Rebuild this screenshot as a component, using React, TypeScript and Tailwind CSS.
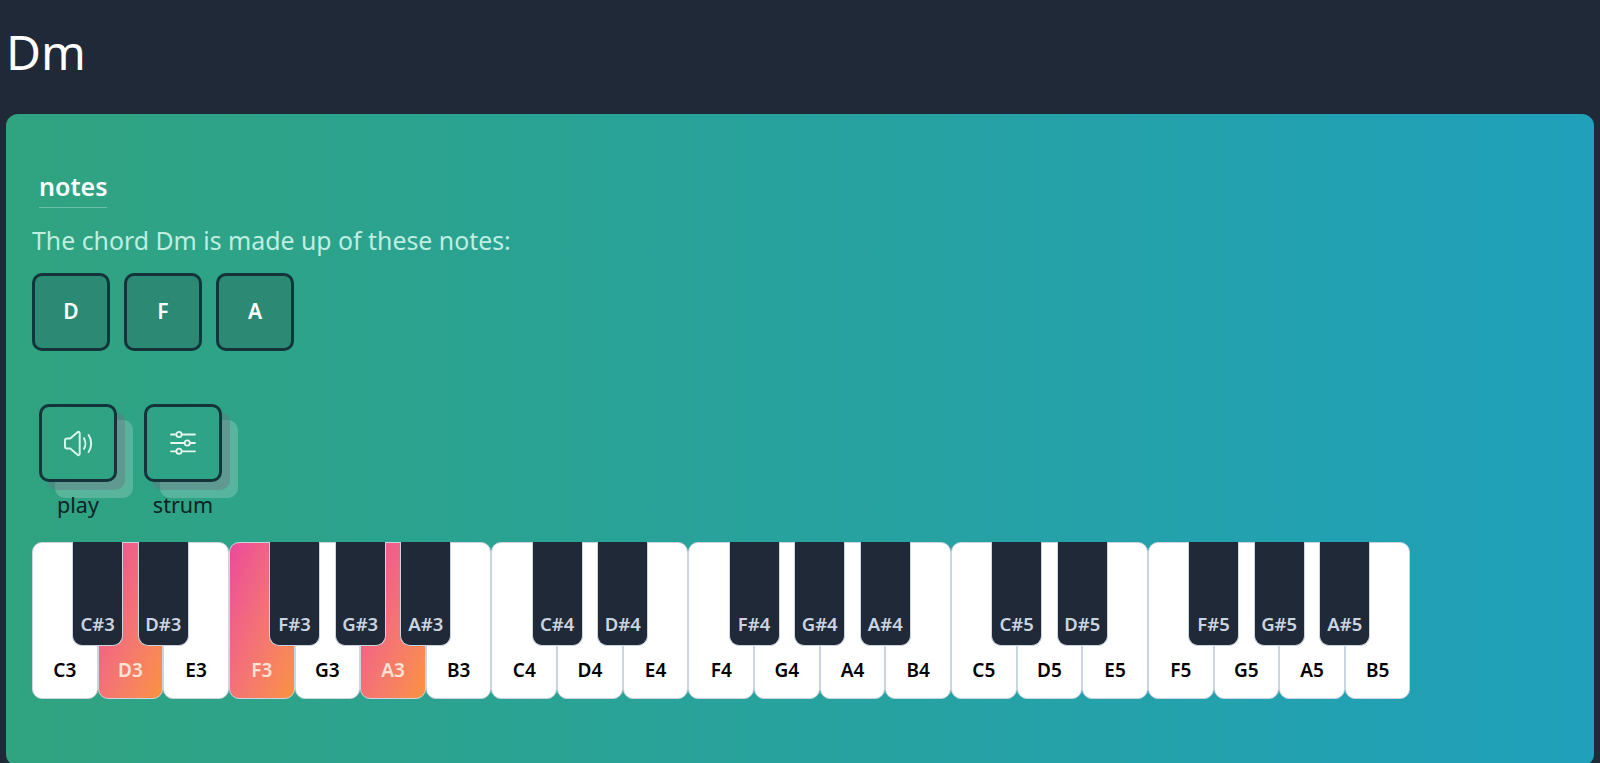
const WHITE = ["C","D","E","F","G","A","B"];
const HAS_SHARP: Record<string, boolean> = { C: true, D: true, F: true, G: true, A: true };
const HIGHLIGHT = ["D3", "F3", "A3"];
const OCTAVES = [3, 4, 5];

function SpeakerIcon() {
  return (
    <svg className="ml-[2px]" width="30" height="27" viewBox="0 0 30 27" fill="none" stroke="#d8f5ea" strokeWidth="2" strokeLinecap="round" strokeLinejoin="round">
      <path d="M3 8.500h3.200L13.500 2.200c.8-.7 2.200-.2 2.200 1v20.600c0 1.200-1.400 1.700-2.200 1L6.200 18.500H3c-1 0-2-1-2-2v-6c0-1 1-2 2-2z" />
      <path d="M20 8.200c1.800 3 1.800 7.600 0 10.600" />
      <path d="M24.600 5c3.400 4.800 3.400 12.200 0 17" />
    </svg>
  );
}

function SlidersIcon() {
  return (
    <svg width="26" height="24" viewBox="0 0 26 24" fill="none" stroke="#e4f8f0" strokeWidth="1.800" strokeLinecap="round">
      <path d="M1 3.500h24M1 12h24M1 20.300h24" />
      <circle cx="9" cy="3.500" r="2.600" fill="#2da184" />
      <circle cx="17.300" cy="12" r="2.600" fill="#2da184" />
      <circle cx="9" cy="20.300" r="2.600" fill="#2da184" />
    </svg>
  );
}

function NoteBox({ name }: { name: string }) {
  return (
    <div className="flex h-[78px] w-[78px] items-center justify-center rounded-[10px] border-[3px] border-[#14343c] bg-[#2c8973] text-[21px] font-semibold text-white">
      {name}
    </div>
  );
}

function ActionButton({ label, children }: { label: string; children: React.ReactNode }) {
  return (
    <div className="flex w-[78px] flex-col items-center">
      <button className="flex h-[78px] w-[78px] items-center justify-center rounded-[10px] border-[3px] border-[#14343c] shadow-[8px_8px_0_0_rgba(107,114,128,0.42),16px_16px_0_0_rgba(255,255,255,0.2)]">
        {children}
      </button>
      <span className="mt-[7px] text-[21.500px] leading-[32px] whitespace-nowrap text-[#0b2224]">{label}</span>
    </div>
  );
}

function WhiteKey({ note, octave }: { note: string; octave: number }) {
  const id = `${note}${octave}`;
  const on = HIGHLIGHT.includes(id);
  return (
    <div className={`relative flex h-[157px] w-[65.650px] shrink-0 items-end justify-center rounded-[10px] border border-[#cbd5e1] pb-[14px] ${on ? "bg-gradient-to-br from-[#ec4899] to-[#fb923c]" : "bg-white"}`}>
      <span className={`text-[19px] leading-[28px] font-semibold ${on ? "text-[#ffe3d6]" : "text-black"}`}>{id}</span>
      {HAS_SHARP[note] && (
        <div className="absolute top-[-1px] right-[-26.500px] z-10 flex h-[104px] w-[51px] items-end justify-center rounded-b-[10px] border border-t-0 border-[#cbd5e1] bg-[#1f2937] pb-[8px]">
          <span className="text-[18.500px] leading-[26px] font-semibold text-[#cbd5e1]">{note}#{octave}</span>
        </div>
      )}
    </div>
  );
}

export default function App() {
  return (
    <div className="flex h-[763px] flex-col overflow-hidden bg-[#1f2937] font-['Noto_Sans','Open_Sans',sans-serif]">
      <header className="flex h-[114px] shrink-0 items-center px-[6px] pb-[10px]">
        <h1 className="text-[48px] leading-none font-normal text-white">Dm</h1>
      </header>
      <main className="mx-[6px] h-[652px] shrink-0 rounded-[12px] bg-gradient-to-r from-[#30a37f] to-[#20a0bb] pt-[55px] pl-[26px]">
        <h2 className="ml-[7px] inline-block border-b border-white/30 pb-[4px] text-[25px] leading-[34px] font-semibold text-white">notes</h2>
        <p className="mt-[14px] text-[24.850px] leading-[36px] font-normal text-[#bfeee0]">The chord Dm is made up of these notes:</p>
        <div className="mt-[15px] flex gap-[14px]">
          <NoteBox name="D" />
          <NoteBox name="F" />
          <NoteBox name="A" />
        </div>
        <div className="mt-[53px] ml-[7px] flex gap-[27px]">
          <ActionButton label="play"><SpeakerIcon /></ActionButton>
          <ActionButton label="strum"><SlidersIcon /></ActionButton>
        </div>
        <div className="mt-[21px] flex">
          {OCTAVES.flatMap((o) => WHITE.map((n) => <WhiteKey key={`${n}${o}`} note={n} octave={o} />))}
        </div>
      </main>
    </div>
  );
}
